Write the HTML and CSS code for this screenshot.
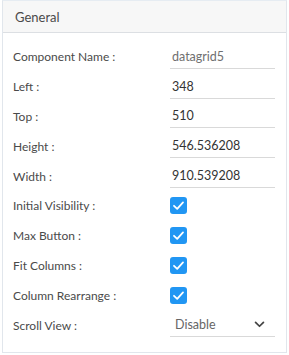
FILE: index.html
```html
<!DOCTYPE html>
<html lang="en">

<head>
    <meta charset="UTF-8">
    <meta name="viewport" content="width=device-width, initial-scale=1.0">
    <title>General</title>
    <link rel="stylesheet" href="styles.css">
</head>

<body>
    <div class="panel">
        <div class="panel-header">General</div>
        <div class="panel-body">
            <div class="row">
                <label>Component Name :</label>
                <div class="field muted">datagrid5</div>
            </div>
            <div class="row">
                <label>Left :</label>
                <div class="field">348</div>
            </div>
            <div class="row">
                <label>Top :</label>
                <div class="field">510</div>
            </div>
            <div class="row">
                <label>Height :</label>
                <div class="field">546.536208</div>
            </div>
            <div class="row">
                <label>Width :</label>
                <div class="field">910.539208</div>
            </div>
            <div class="row">
                <label>Initial Visibility :</label>
                <span class="check"><svg viewBox="0 0 17 17" width="17" height="17"><path d="M4 8.8 L7.2 11.8 L13 5.4" fill="none" stroke="#fff" stroke-width="1.8" stroke-linecap="round" stroke-linejoin="round"/></svg></span>
            </div>
            <div class="row">
                <label>Max Button :</label>
                <span class="check"><svg viewBox="0 0 17 17" width="17" height="17"><path d="M4 8.8 L7.2 11.8 L13 5.4" fill="none" stroke="#fff" stroke-width="1.8" stroke-linecap="round" stroke-linejoin="round"/></svg></span>
            </div>
            <div class="row">
                <label>Fit Columns :</label>
                <span class="check"><svg viewBox="0 0 17 17" width="17" height="17"><path d="M4 8.8 L7.2 11.8 L13 5.4" fill="none" stroke="#fff" stroke-width="1.8" stroke-linecap="round" stroke-linejoin="round"/></svg></span>
            </div>
            <div class="row">
                <label>Column Rearrange :</label>
                <span class="check"><svg viewBox="0 0 17 17" width="17" height="17"><path d="M4 8.8 L7.2 11.8 L13 5.4" fill="none" stroke="#fff" stroke-width="1.8" stroke-linecap="round" stroke-linejoin="round"/></svg></span>
            </div>
            <div class="row">
                <label>Scroll View :</label>
                <div class="field select">
                    <span>Disable</span>
                    <svg viewBox="0 0 12 8" width="11" height="7"><path d="M1.5 1.5 L6 6 L10.5 1.5" fill="none" stroke="#444" stroke-width="2" stroke-linecap="round" stroke-linejoin="round"/></svg>
                </div>
            </div>
        </div>
    </div>
</body>

</html>
```

FILE: styles.css
```css
* {
    box-sizing: border-box;
}

body {
    margin: 0;
    font-family: Lato, "Open Sans", sans-serif;
    color: #444;
    background: #fff;
}

.panel {
    width: 285px;
    margin-left: 2px;
    border: 1px solid #e1e6ec;
    border-top-color: #e6ecf2;
}

.panel-header {
    height: 32px;
    padding: 0 12px;
    display: flex;
    align-items: center;
    background: #f7f7f7;
    border-bottom: 1px solid #dcdfe3;
    font-size: 13px;
    color: #4a4a4a;
}

.panel-body {
    padding: 9px 0 12px 10px;
}

.row {
    height: 29.8px;
    display: flex;
    align-items: center;
}

.row label {
    width: 157px;
    font-size: 12px;
    color: #4a4a4a;
}

.field {
    width: 105px;
    height: 24px;
    padding-left: 2px;
    display: flex;
    align-items: center;
    border-bottom: 1px solid #d9d9d9;
    font-size: 12.5px;
    color: #333;
}

.field.muted {
    color: #707070;
}

.select {
    justify-content: space-between;
    padding: 0 10px 0 5px;
    color: #666;
}

.check {
    width: 17px;
    height: 17px;
    border-radius: 3px;
    background: #2196f3;
    display: block;
}

.check svg {
    display: block;
}
```
